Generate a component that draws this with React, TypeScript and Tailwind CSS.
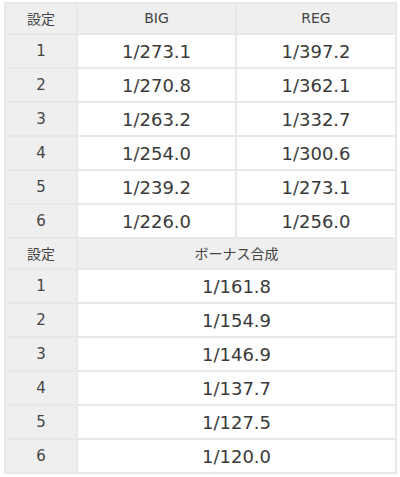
import React from 'react';

const first = [
    ['1', '1/273.1', '1/397.2'],
    ['2', '1/270.8', '1/362.1'],
    ['3', '1/263.2', '1/332.7'],
    ['4', '1/254.0', '1/300.6'],
    ['5', '1/239.2', '1/273.1'],
    ['6', '1/226.0', '1/256.0'],
];

const second = [
    ['1', '1/161.8'],
    ['2', '1/154.9'],
    ['3', '1/146.9'],
    ['4', '1/137.7'],
    ['5', '1/127.5'],
    ['6', '1/120.0'],
];

const font = { fontFamily: '"DejaVu Sans", "Noto Sans CJK JP", sans-serif' };
const jp = { fontFamily: '"Noto Sans CJK JP", sans-serif' };

const th = 'h-[31px] border-2 border-[#e8e8e8] bg-[#efefef] text-[14px] font-normal text-[#444] text-center';
const side = 'h-[34px] border-2 border-[#e8e8e8] bg-[#efefef] text-[15px] text-[#444] text-center';
const cell = 'h-[34px] border-2 border-[#e8e8e8] bg-white text-[18px] text-[#3a3a3a] text-center';

export default function App() {
    return (
        <div className="bg-white min-h-[477px] pt-[2px] pl-[4px]" style={font}>
            <table className="w-[391px] border-collapse table-fixed">
                <colgroup>
                    <col className="w-[72px]" />
                    <col className="w-[159px]" />
                    <col className="w-[160px]" />
                </colgroup>
                <tbody>
                    <tr>
                        <th className={th} style={jp}>設定</th>
                        <th className={th}>BIG</th>
                        <th className={th}>REG</th>
                    </tr>
                    {first.map((r) => (
                        <tr key={r[0]}>
                            <td className={side}>{r[0]}</td>
                            <td className={cell}>{r[1]}</td>
                            <td className={cell}>{r[2]}</td>
                        </tr>
                    ))}
                    <tr>
                        <th className={th} style={jp}>設定</th>
                        <th className={th} colSpan={2} style={jp}>
                            ボーナス合成
                        </th>
                    </tr>
                    {second.map((r) => (
                        <tr key={'b' + r[0]}>
                            <td className={side}>{r[0]}</td>
                            <td className={cell} colSpan={2}>{r[1]}</td>
                        </tr>
                    ))}
                </tbody>
            </table>
        </div>
    );
}
